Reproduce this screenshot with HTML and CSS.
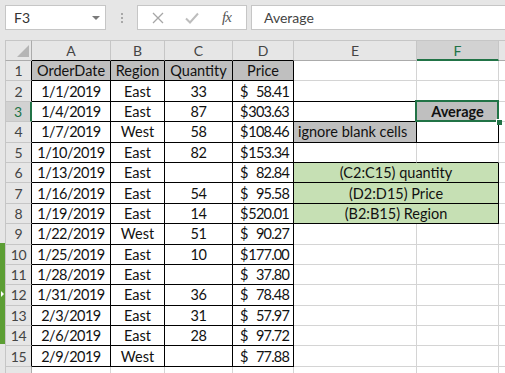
FILE: index.html
```html
<!DOCTYPE html>
<html lang="en">
<head>
  <meta charset="UTF-8" />
  <title>Average - Excel</title>
  <link rel="stylesheet" href="styles.css">
</head>
<body>
  <div class="toolbar">
    <div class="name-box">
      <span>F3</span>
      <span class="drop"></span>
    </div>
    <div class="grip"><i></i><i></i><i></i></div>
    <div class="fx-box">
      <svg class="ico" width="12" height="12" viewBox="0 0 12 12"><path d="M1 1 L11 11 M11 1 L1 11" stroke="#a6a6a6" stroke-width="1.3" fill="none"/></svg>
      <svg class="ico" width="14" height="12" viewBox="0 0 14 12"><path d="M1 6.5 L5 10.5 L13 1.5" stroke="#bdbdbd" stroke-width="2" fill="none"/></svg>
      <span class="fx">fx</span>
    </div>
    <div class="formula">Average</div>
  </div>

  <div class="sheet-wrap">
    <div class="edge">
      <div class="edge-bar"><span class="edge-arrow"></span></div>
    </div>
    <div class="sheet">
      <!-- column headers -->
      <div class="corner"><span class="tri"></span></div>
      <div class="hdr bk">A</div>
      <div class="hdr bk">B</div>
      <div class="hdr bk">C</div>
      <div class="hdr bk">D</div>
      <div class="hdr">E</div>
      <div class="hdr hdr-sel">F</div>
      <div class="hdr last"></div>

      <!-- 1 -->
      <div class="rh">1</div>
      <div class="c t gray ctr">OrderDate</div>
      <div class="c t gray ctr">Region</div>
      <div class="c t gray ctr">Quantity</div>
      <div class="c t gray ctr">Price</div>
      <div class="c"></div>
      <div class="c"></div>
      <div class="c last"></div>

      <!-- 2 -->
      <div class="rh">2</div>
      <div class="c t ctr n">1/1/2019</div>
      <div class="c t ctr">East</div>
      <div class="c t ctr n">33</div>
      <div class="c t price"><span>$</span><span>58.41</span></div>
      <div class="c bb"></div>
      <div class="c"></div>
      <div class="c last"></div>

      <!-- 3 -->
      <div class="rh rh-sel">3</div>
      <div class="c t ctr n">1/4/2019</div>
      <div class="c t ctr">East</div>
      <div class="c t ctr n">87</div>
      <div class="c t price"><span>$</span><span>303.63</span></div>
      <div class="c bb"></div>
      <div class="c t gray ctr sel"><b>Average</b></div>
      <div class="c last"></div>

      <!-- 4 -->
      <div class="rh">4</div>
      <div class="c t ctr n">1/7/2019</div>
      <div class="c t ctr">West</div>
      <div class="c t ctr n">58</div>
      <div class="c t price"><span>$</span><span>108.46</span></div>
      <div class="c t gray">ignore blank cells</div>
      <div class="c t"></div>
      <div class="c last"></div>

      <!-- 5 -->
      <div class="rh">5</div>
      <div class="c t ctr n">1/10/2019</div>
      <div class="c t ctr">East</div>
      <div class="c t ctr n">82</div>
      <div class="c t price"><span>$</span><span>153.34</span></div>
      <div class="c bb"></div>
      <div class="c bb"></div>
      <div class="c last"></div>

      <!-- 6 -->
      <div class="rh">6</div>
      <div class="c t ctr n">1/13/2019</div>
      <div class="c t ctr">East</div>
      <div class="c t ctr"></div>
      <div class="c t price"><span>$</span><span>82.84</span></div>
      <div class="c t note ctr">(C2:C15) quantity</div>
      <div class="c last"></div>

      <!-- 7 -->
      <div class="rh">7</div>
      <div class="c t ctr n">1/16/2019</div>
      <div class="c t ctr">East</div>
      <div class="c t ctr n">54</div>
      <div class="c t price"><span>$</span><span>95.58</span></div>
      <div class="c t note ctr">(D2:D15) Price</div>
      <div class="c last"></div>

      <!-- 8 -->
      <div class="rh">8</div>
      <div class="c t ctr n">1/19/2019</div>
      <div class="c t ctr">East</div>
      <div class="c t ctr n">14</div>
      <div class="c t price"><span>$</span><span>520.01</span></div>
      <div class="c t note ctr">(B2:B15) Region</div>
      <div class="c last"></div>

      <!-- 9 -->
      <div class="rh">9</div>
      <div class="c t ctr n">1/22/2019</div>
      <div class="c t ctr">West</div>
      <div class="c t ctr n">51</div>
      <div class="c t price"><span>$</span><span>90.27</span></div>
      <div class="c"></div>
      <div class="c"></div>
      <div class="c last"></div>

      <!-- 10 -->
      <div class="rh">10</div>
      <div class="c t ctr n">1/25/2019</div>
      <div class="c t ctr">East</div>
      <div class="c t ctr n">10</div>
      <div class="c t price"><span>$</span><span>177.00</span></div>
      <div class="c"></div>
      <div class="c"></div>
      <div class="c last"></div>

      <!-- 11 -->
      <div class="rh">11</div>
      <div class="c t ctr n">1/28/2019</div>
      <div class="c t ctr">East</div>
      <div class="c t ctr"></div>
      <div class="c t price"><span>$</span><span>37.80</span></div>
      <div class="c"></div>
      <div class="c"></div>
      <div class="c last"></div>

      <!-- 12 -->
      <div class="rh">12</div>
      <div class="c t ctr n">1/31/2019</div>
      <div class="c t ctr">East</div>
      <div class="c t ctr n">36</div>
      <div class="c t price"><span>$</span><span>78.48</span></div>
      <div class="c"></div>
      <div class="c"></div>
      <div class="c last"></div>

      <!-- 13 -->
      <div class="rh">13</div>
      <div class="c t ctr n">2/3/2019</div>
      <div class="c t ctr">East</div>
      <div class="c t ctr n">31</div>
      <div class="c t price"><span>$</span><span>57.97</span></div>
      <div class="c"></div>
      <div class="c"></div>
      <div class="c last"></div>

      <!-- 14 -->
      <div class="rh">14</div>
      <div class="c t ctr n">2/6/2019</div>
      <div class="c t ctr">East</div>
      <div class="c t ctr n">28</div>
      <div class="c t price"><span>$</span><span>97.72</span></div>
      <div class="c"></div>
      <div class="c"></div>
      <div class="c last"></div>

      <!-- 15 -->
      <div class="rh">15</div>
      <div class="c t ctr n">2/9/2019</div>
      <div class="c t ctr">West</div>
      <div class="c t ctr"></div>
      <div class="c t price"><span>$</span><span>77.88</span></div>
      <div class="c"></div>
      <div class="c"></div>
      <div class="c last"></div>

      <!-- 16 (cut off) -->
      <div class="rh rh-plain"></div>
      <div class="c"></div>
      <div class="c"></div>
      <div class="c"></div>
      <div class="c"></div>
      <div class="c"></div>
      <div class="c"></div>
      <div class="c last"></div>
    </div>
  </div>
</body>
</html>
```

FILE: styles.css
```css
html, body {
  margin: 0;
  height: 100%;
  overflow: hidden;
  background: #e6e6e6;
  font-family: Lato, "Liberation Sans", sans-serif;
}

/* formula bar */
.toolbar { height: 40px; box-sizing: border-box; padding: 5px 0 0 5px; display: flex; align-items: flex-start; }
.name-box { width: 101px; height: 25px; box-sizing: border-box; background: #fff; border: 1px solid #c6c6c6; display: flex; align-items: center; justify-content: space-between; padding: 0 5px 0 8px; font-size: 14px; color: #333; }
.drop { width: 0; height: 0; border-left: 4px solid transparent; border-right: 4px solid transparent; border-top: 4px solid #7a7a7a; }
.grip { width: 31px; height: 25px; display: flex; flex-direction: column; align-items: center; justify-content: center; gap: 2px; }
.grip i { width: 2px; height: 2px; background: #a8a8a8; }
.fx-box { width: 110px; height: 25px; box-sizing: border-box; background: #fff; border: 1px solid #c6c6c6; display: flex; align-items: center; padding: 0 0 0 14px; }
.fx-box .ico { display: block; }
.fx-box .ico + .ico { margin-left: 21px; }
.fx { margin-left: 23px; font-family: "Liberation Serif", serif; font-style: italic; font-size: 15px; color: #555; letter-spacing: -1px; }
.formula { flex: 1; height: 25px; box-sizing: border-box; margin-left: 4px; background: #fff; border: 1px solid #c6c6c6; border-right: none; padding-left: 12px; font-size: 14px; color: #444; display: flex; align-items: center; }

/* sheet */
.sheet-wrap { display: flex; }
.edge { width: 5px; flex: none; }
.edge-bar { margin-top: 203px; height: 101px; background: #5c9e34; display: flex; align-items: center; }
.edge-arrow { width: 0; height: 0; border-left: 3px solid #fff; border-top: 3px solid transparent; border-bottom: 3px solid transparent; margin-left: 1px; }

.sheet {
  flex: 1;
  display: grid;
  grid-template-columns: 27px 79px 54px 68px 61px 123px 82px 1fr;
  grid-template-rows: 21px repeat(16, 20.4px);
  background: #fff;
  font-size: 14.5px;
  color: #111;
}

.corner { background: #e6e6e6; border-left: 1px solid #c6c6c6; border-top: 1px solid #c6c6c6; border-right: 1px solid #ababab; border-bottom: 1px solid #ababab; display: flex; align-items: flex-end; justify-content: flex-end; padding: 0 2px 3px 0; }
.tri { width: 0; height: 0; border-left: 12px solid transparent; border-bottom: 12px solid #b5b5b5; }

.hdr { background: #e6e6e6; border-top: 1px solid #c6c6c6; border-right: 1px solid #c6c6c6; border-bottom: 1px solid #ababab; display: flex; align-items: center; justify-content: center; font-size: 14px; color: #444; }
.hdr.bk { border-bottom-color: #000; }
.hdr-sel { background: #d2d2d2; color: #217346; border-bottom: 2px solid #217346; }
.hdr.last { border-right: none; }

.rh { background: #e6e6e6; border-left: 1px solid #c6c6c6; border-bottom: 1px solid #c6c6c6; border-right: 1px solid #000; display: flex; align-items: center; justify-content: center; font-size: 14px; color: #444; letter-spacing: -0.3px; }
.rh-sel { background: #d2d2d2; color: #217346; border-right: 2px solid #217346; }
.rh-plain { border-right-color: #ababab; }

.c { border-right: 1px solid #d4d4d4; border-bottom: 1px solid #d4d4d4; display: flex; align-items: center; padding: 0 4px; white-space: nowrap; overflow: hidden; min-width: 0; }
.c.last { border-right: none; }
.ctr { justify-content: center; }
.n { letter-spacing: -0.5px; }
.t { border-right-color: #000; border-bottom-color: #000; }
.bb { border-bottom-color: #000; }
.gray { background: #bfbfbf; }
.price { justify-content: space-between; padding: 0 4px 0 7px; letter-spacing: -0.8px; }
.note { grid-column: span 2; background: #c6e0b4; }

.sel { position: relative; overflow: visible; z-index: 1; }
.sel b { font-weight: 700; }
.sel::before { content: ""; position: absolute; left: -2px; top: -2px; right: -1px; bottom: -1px; border: 2px solid #217346; }
.sel::after { content: ""; position: absolute; right: -4px; bottom: -4px; width: 5px; height: 5px; background: #217346; border-left: 1px solid #fff; border-top: 1px solid #fff; }
```
